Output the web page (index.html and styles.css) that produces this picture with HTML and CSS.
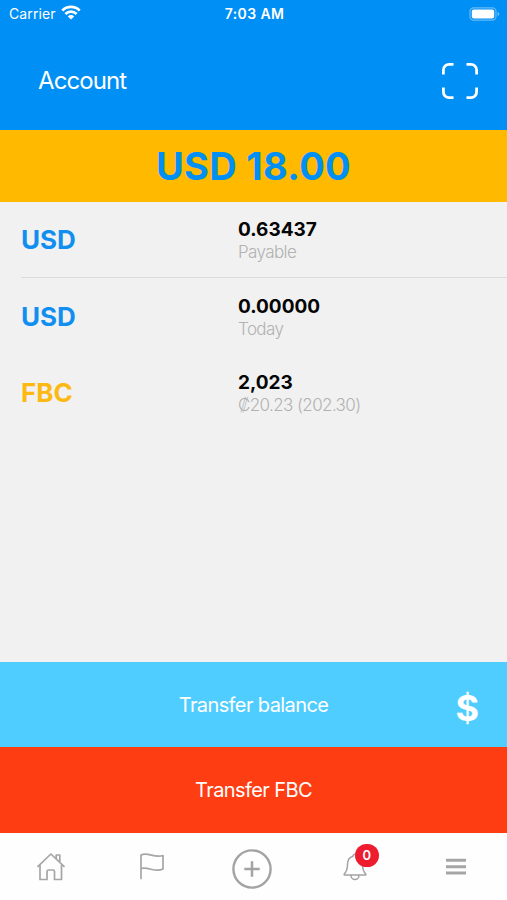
FILE: index.html
```
<!DOCTYPE html>
<html lang="en">
<head>
    <meta charset="UTF-8">
    <title>Account</title>
    <link rel="stylesheet" href="styles.css">
</head>
<body>
    <div class="app">
        <header class="header">
            <div class="status">
                <div class="carrier">
                    <span class="carrier-name">Carrier</span>
                    <svg class="wifi" width="20" height="15" viewBox="0 0 20 15" fill="none" stroke="#fff" stroke-width="2.7">
                        <path d="M1.3 5.6a12.2 12.2 0 0 1 17.4 0M4.4 9a7.9 7.9 0 0 1 11.2 0"/>
                        <path d="M6.8 11.4a4.5 4.5 0 0 1 6.4 0L10 14.6z" fill="#fff" stroke="none"/>
                    </svg>
                </div>
                <span class="time">7:03 AM</span>
                <svg class="battery" width="31" height="14" viewBox="0 0 31 14">
                    <rect x="1" y=".8" width="26" height="12.4" rx="3.6" fill="none" stroke="#fff" stroke-opacity=".4" stroke-width="1.2"/>
                    <rect x="2.8" y="2.5" width="22.4" height="9" rx="2" fill="#fff"/>
                    <path d="M28.6 4.8q1.7 1 1.7 2.2t-1.7 2.2z" fill="#fff" fill-opacity=".45"/>
                </svg>
            </div>
            <div class="title-bar">
                <h1>Account</h1>
                <svg class="scan" width="36" height="36" viewBox="0 0 36 36" fill="none" stroke="#fff" stroke-width="2.8">
                    <path d="M1.4 11.5V7A5.6 5.6 0 0 1 7 1.4h4.5M24.5 1.4H29A5.6 5.6 0 0 1 34.6 7v4.5M34.6 24.5V29a5.6 5.6 0 0 1-5.6 5.6h-4.5M11.5 34.6H7A5.6 5.6 0 0 1 1.4 29v-4.5"/>
                </svg>
            </div>
        </header>

        <div class="total"><span>USD 18.00</span></div>

        <main class="list">
            <div class="row line">
                <div class="currency">USD</div>
                <div class="info">
                    <div class="value">0.63437</div>
                    <div class="label">Payable</div>
                </div>
            </div>
            <div class="row">
                <div class="currency">USD</div>
                <div class="info">
                    <div class="value">0.00000</div>
                    <div class="label">Today</div>
                </div>
            </div>
            <div class="row">
                <div class="currency fbc">FBC</div>
                <div class="info">
                    <div class="value">2,023</div>
                    <div class="label">₡20.23 (202.30)</div>
                </div>
            </div>
        </main>

        <div class="button balance">
            <span class="button-text">Transfer balance</span>
            <span class="dollar">$</span>
        </div>
        <div class="button transfer-fbc">
            <span class="button-text">Transfer FBC</span>
        </div>

        <nav class="tabs">
            <div class="tab">
                <svg width="28" height="28" viewBox="0 0 28 28" fill="none" stroke="#a6a6a6" stroke-width="1.7" stroke-linejoin="round" stroke-linecap="round">
                    <path d="M1 13.3L13.9 1 27 13.3M3 12v14.5h7v-8q0-1.5 1.5-1.5H16q1.5 0 1.5 1.5v8h7V12M19.2 5.5V2h3.6v6.8"/>
                </svg>
            </div>
            <div class="tab">
                <svg width="26" height="28" viewBox="0 0 26 28" fill="none" stroke="#a6a6a6" stroke-width="1.7" stroke-linejoin="round" stroke-linecap="round">
                    <path d="M2 25.5V2c7-3.5 13 3.5 22 .5V16c-8 4-14-2.5-22-.5"/>
                </svg>
            </div>
            <div class="tab plus">
                <svg width="40" height="40" viewBox="0 0 40 40" fill="none" stroke="#a3a3a3">
                    <circle cx="20" cy="20" r="18.6" stroke-width="2.4"/>
                    <path d="M20 12.3v15.4M12.3 20h15.4" stroke-width="2.5"/>
                </svg>
            </div>
            <div class="tab">
                <div class="bell">
                    <svg width="24" height="28" viewBox="0 0 24 28" fill="none" stroke="#a3a3a3" stroke-width="1.5" stroke-linejoin="round">
                        <path d="M12 1.2a2 2 0 0 0-2 2c-4 1-5.5 4.300-5.500 8.300 0 5-.8 7-3.300 9.500v1h21.600v-1c-2.500-2.500-3.300-4.500-3.300-9.500 0-4-1.500-7.300-5.500-8.300a2 2 0 0 0-2-2zM8 22.200a4 4.300 0 0 0 8 0"/>
                    </svg>
                    <span class="badge">0</span>
                </div>
            </div>
            <div class="tab">
                <svg width="20" height="18" viewBox="0 0 20 18" fill="#a6a6a6">
                    <path d="M0 .8h20v3H0zM0 7.2h20v3H0zM0 13.6h20v3H0z"/>
                </svg>
            </div>
        </nav>
    </div>
</body>
</html>
```
FILE: styles.css
```
* {
    box-sizing: border-box;
}
body {
    margin: 0;
    font-family: Inter, Roboto, sans-serif;
    background: #f1f1f1;
}
.app {
    width: 507px;
    height: 900px;
    display: flex;
    flex-direction: column;
    overflow: hidden;
}
.header {
    height: 130px;
    background: #008ff4;
    color: white;
}
.status {
    height: 27px;
    padding: 0 7px 0 9px;
    display: grid;
    grid-template-columns: 1fr auto 1fr;
    align-items: center;
    font-size: 14px;
}
.carrier {
    display: flex;
    align-items: center;
    gap: 5px;
}
.carrier-name {
    letter-spacing: 0.1px;
}
.wifi {
    margin-bottom: 2px;
}
.time {
    font-weight: 600;
    letter-spacing: 0.4px;
}
.battery {
    justify-self: end;
}
.title-bar {
    display: flex;
    justify-content: space-between;
    align-items: center;
    height: 108px;
    padding: 0 29px 0 38px;
}
h1 {
    margin: 0;
    padding-bottom: 2px;
    font-size: 24px;
    font-weight: 400;
    letter-spacing: -0.9px;
}
.total {
    height: 72px;
    background: #ffba00;
    color: #008ff4;
    display: flex;
    justify-content: center;
    align-items: center;
    font-size: 38px;
    font-weight: 700;
    letter-spacing: 0.3px;
}
.list {
    flex: 1;
}
.row {
    height: 76px;
    margin-left: 21px;
    display: grid;
    grid-template-columns: 217px 1fr;
    align-items: center;
}
.line {
    border-bottom: 1px solid #dcdcdc;
}
.currency {
    color: #118ff0;
    font-size: 26px;
    font-weight: 700;
}
.currency.fbc {
    color: #fdb913;
}
.info {
    padding-top: 3px;
}
.value {
    font-size: 19px;
    font-weight: 700;
    line-height: 22px;
    color: #050505;
}
.label {
    font-size: 17px;
    font-weight: 300;
    line-height: 22px;
    letter-spacing: -0.6px;
    color: #b2b2b2;
}
.button {
    height: 86px;
    display: grid;
    grid-template-columns: 1fr auto 1fr;
    align-items: center;
    color: white;
    font-size: 20px;
    letter-spacing: -0.6px;
}
.button-text {
    grid-column: 2;
}
.balance {
    height: 85px;
    background: #50cdff;
}
.transfer-fbc {
    background: #ff3d12;
}
.dollar {
    padding: 6px 28px 0 0;
    text-align: right;
    font-size: 36px;
    font-weight: 700;
    letter-spacing: 0;
}
.tabs {
    height: 67px;
    background: #fefefe;
    display: grid;
    grid-template-columns: repeat(5, 1fr);
}
.tab {
    display: flex;
    justify-content: center;
    align-items: center;
}
.plus {
    padding: 4px 2px 0 0;
}
.tab svg {
    display: block;
}
.bell {
    position: relative;
}
.badge {
    position: absolute;
    top: -9px;
    left: 12px;
    width: 24px;
    height: 23px;
    border-radius: 12px;
    background: #ed1c2e;
    color: white;
    font-size: 13px;
    font-weight: 600;
    line-height: 23px;
    text-align: center;
}
```
